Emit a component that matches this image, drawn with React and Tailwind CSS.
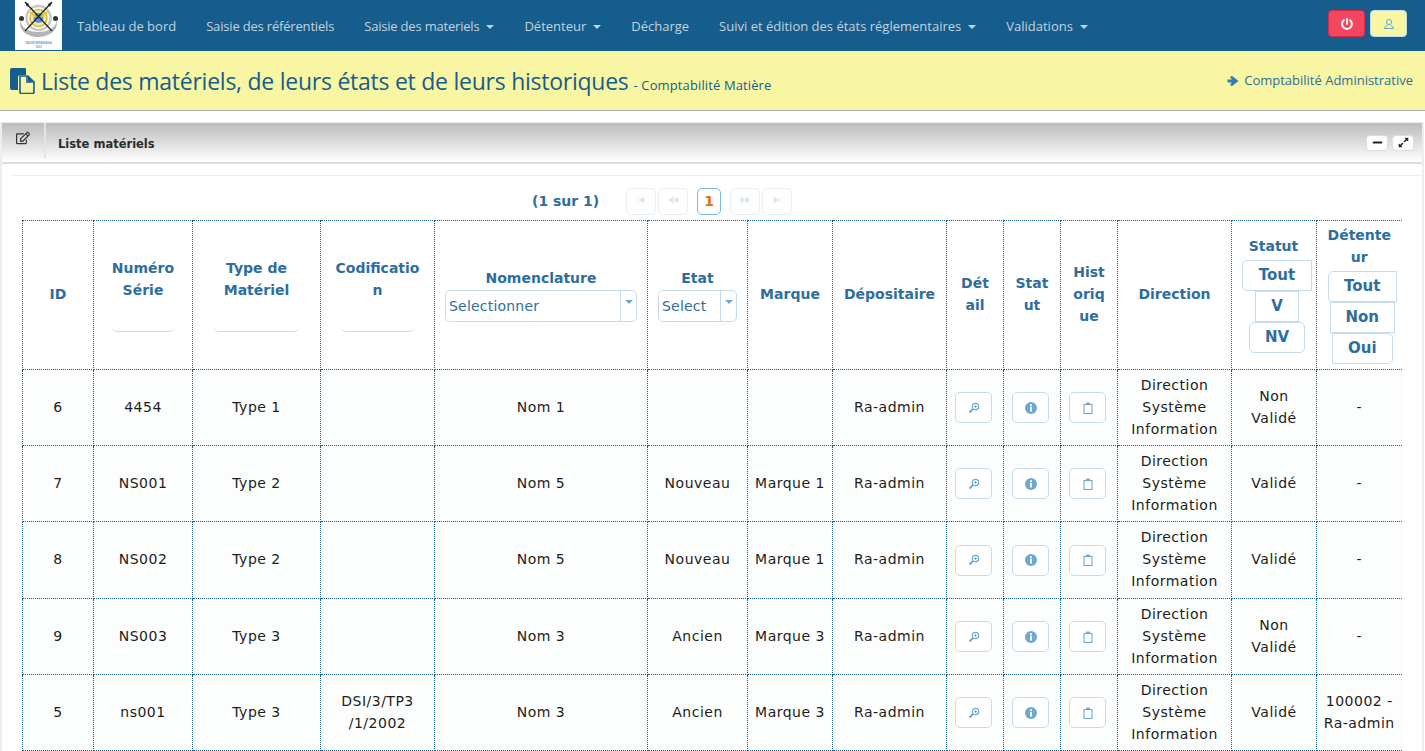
import React from "react";
import { FaRegEdit, FaMinus, FaExpandAlt, FaPowerOff } from "react-icons/fa";

const NAV = [
  ["Tableau de bord", false, ""],
  ["Saisie des référentiels", false, "tracking-[-0.18px]"],
  ["Saisie des materiels", true, "tracking-[-0.2px]"],
  ["Détenteur", true, ""],
  ["Décharge", false, ""],
  ["Suivi et édition des états réglementaires", true, ""],
  ["Validations", true, ""],
];

const WIDTHS = [71, 99, 128, 114, 213, 100, 85, 114, 57, 57, 57, 114, 85, 85];

const ROWS = [
  ["6", "4454", "Type 1", "", "Nom 1", "", "", "Ra-admin", ["Non", "Validé"], "-"],
  ["7", "NS001", "Type 2", "", "Nom 5", "Nouveau", "Marque 1", "Ra-admin", ["Validé"], "-"],
  ["8", "NS002", "Type 2", "", "Nom 5", "Nouveau", "Marque 1", "Ra-admin", ["Validé"], "-"],
  ["9", "NS003", "Type 3", "", "Nom 3", "Ancien", "Marque 3", "Ra-admin", ["Non", "Validé"], "-"],
  ["5", "ns001", "Type 3", ["DSI/3/TP3", "/1/2002"], "Nom 3", "Ancien", "Marque 3", "Ra-admin", ["Validé"], ["100002 -", "Ra-admin"]],
];

const ROW_H = [76, 76, 77, 76, 76];

function Lines({ v }) {
  if (Array.isArray(v)) return v.map((l, i) => <div key={i}>{l}</div>);
  return v;
}

function Caret() {
  return <span className="inline-block ml-[7px] align-middle border-x-[4px] border-x-transparent border-t-[4px] border-t-[#c4d3de]" />;
}

function Logo() {
  return (
    <div className="w-[47px] h-[50px] bg-white shrink-0 relative">
      <svg viewBox="0 0 47 50" className="w-[47px] h-[50px]">
        <path d="M5 21 C4 32 14 37 23 37 C32 37 43 32 42 21 C40 28 33 32 23 32 C13 32 7 28 5 21Z" fill="#b5b5b5" />
        <circle cx="23.5" cy="18" r="12" fill="none" stroke="#c8c8c8" strokeWidth="2.5" />
        <circle cx="23.5" cy="18" r="8.5" fill="#efe7b0" stroke="#d9b93c" strokeWidth="1.5" />
        <circle cx="23.5" cy="18" r="5" fill="#5b8fd8" />
        <path d="M10 2 L37 31 M37 2 L10 31" stroke="#222" strokeWidth="1.2" />
        <path d="M10 2 L14 4 L12 7Z M37 2 L33 4 L35 7Z" fill="#222" />
        <circle cx="6.5" cy="18.5" r="2.5" fill="#333" />
        <circle cx="40.5" cy="18.5" r="2.5" fill="#333" />
        <path d="M15 12 L21 17 M32 12 L26 17" stroke="#e3c52c" strokeWidth="2" />
      </svg>
      <div className="absolute left-0 right-0 top-[41px] text-center text-[3px] leading-[4px] font-bold text-[#6f9be0]">FAONTSERANANA</div>
      <div className="absolute left-0 right-0 top-[45px] text-center text-[3px] leading-[4px] text-[#555]">1820</div>
    </div>
  );
}

function PageIcon() {
  return (
    <svg viewBox="0 0 25 26" className="w-[25px] h-[26px] shrink-0">
      <path d="M2 0 H15 a1 1 0 0 1 1 1 V7 H10 a2 2 0 0 0 -2 2 V22 H2 a2 2 0 0 1 -2 -2 V2 a2 2 0 0 1 2 -2Z" fill="#155d8d" />
      <path d="M10 8 H17 V14 H24 V24 a1.5 1.5 0 0 1 -1.5 1.5 H11.5 A1.5 1.5 0 0 1 10 24Z" fill="#f8f6a2" stroke="#155d8d" strokeWidth="1.6" />
      <path d="M18 7 L24.5 13.5 H18Z" fill="#155d8d" />
    </svg>
  );
}

function ArrowIcon() {
  return (
    <svg viewBox="0 0 12 12" className="w-[12px] h-[12px] shrink-0">
      <path d="M0.5 4.5 H5 L3 2.5 L4.8 0.8 L11.5 6 L4.8 11.2 L3 9.5 L5 7.5 H0.5Z" fill="#337ab7" />
    </svg>
  );
}

function PersonIcon() {
  return (
    <svg viewBox="0 0 12 12" className="w-[12px] h-[12px]" fill="none" stroke="#6da8d5" strokeWidth="1">
      <ellipse cx="6" cy="4" rx="2.6" ry="2.6" />
      <path d="M4.5 7 L2 9 V10.5 H10 V9 L7.5 7" />
      <path d="M1 10.5 H11" />
    </svg>
  );
}

function PagerBtn({ kind }) {
  const paths = {
    first: "M2 2 V8 M8 2 L3.5 5 L8 8Z",
    prev: "M5 2 L1 5 L5 8Z M10 2 L6 5 L10 8Z",
    next: "M1 2 L5 5 L1 8Z M6 2 L10 5 L6 8Z",
    last: "M2 2 L6.5 5 L2 8Z M8 2 V8",
  };
  return (
    <span className="w-[30px] h-[27px] rounded-[5px] border border-[#e5f0f7] flex items-start justify-center pt-[6px] bg-white">
      <svg viewBox="0 0 11 10" className="w-[11px] h-[10px]" fill="#d6e5f0" stroke="#d6e5f0" strokeWidth="0.6"><path d={paths[kind]} /></svg>
    </span>
  );
}

function ActionBtn({ children }) {
  return (
    <span className="ml-[8px] w-[37px] h-[31px] rounded-[5px] border border-[#c5dbec] flex items-center justify-center bg-white">
      {children}
    </span>
  );
}

function ZoomIcon() {
  return (
    <svg viewBox="0 0 12 12" className="w-[12px] h-[12px]" fill="none" stroke="#6da8d5" strokeWidth="1.2">
      <circle cx="7.5" cy="4.5" r="3.2" />
      <path d="M5 7 L1.5 10.5" strokeWidth="2" />
      <path d="M6 4.5 H9 M7.5 3 V6" strokeWidth="0.9" />
    </svg>
  );
}

function InfoIcon() {
  return (
    <svg viewBox="0 0 12 12" className="w-[12px] h-[12px]">
      <circle cx="6" cy="6" r="6" fill="#6da8d5" />
      <rect x="5" y="5" width="2" height="4.5" fill="#fff" />
      <rect x="5" y="2.3" width="2" height="1.8" fill="#fff" />
    </svg>
  );
}

function ClipIcon() {
  return (
    <svg viewBox="0 0 10 12" className="w-[10px] h-[12px]" fill="none" stroke="#6da8d5" strokeWidth="1.1">
      <rect x="1" y="2.5" width="8" height="9" />
      <rect x="3" y="0.6" width="4" height="2.4" fill="#6da8d5" stroke="none" />
    </svg>
  );
}

function Dropdown({ w, label }) {
  return (
    <div className={`mx-auto ${w} h-[32px] rounded-[5px] border border-[#c5dbec] flex bg-white font-normal text-left`}>
      <span className="flex-1 pl-[3px] leading-[30px] tracking-[0.2px] text-[#2e6e9e]">{label}</span>
      <span className="w-[16px] border-l border-[#c5dbec] flex justify-center pt-[9px]">
        <span className="block w-0 h-0 border-x-[4px] border-x-transparent border-t-[4px] border-t-[#6da8d5]" />
      </span>
    </div>
  );
}

function Toggle({ label, w, rounded }) {
  return (
    <div className={`mx-auto ${w} h-[31px] leading-[29px] text-[15px] border border-[#c5dbec] ${rounded} bg-white`}>{label}</div>
  );
}

function FilterInput({ w }) {
  return <div className={`mx-auto mt-[11px] ${w} h-[20px] border-b border-[#c5dbec] rounded-b-[5px]`} />;
}

const TH = "border border-dotted border-[#155d8d] px-0 align-middle text-center font-bold text-[#2e6e9e] text-[14px] leading-[22px] last:border-r-0";
const THT = `${TH} pb-[2px]`;
const TD = "border border-dotted border-[#155d8d] p-0 pb-[2px] align-middle text-center text-[#1c1c1c] text-[14px] leading-[22px] tracking-[0.5px] last:border-r-0";
const TDA = "border border-dotted border-[#155d8d] p-0 align-middle text-center";

export default function App() {
  return (
    <div className="w-[1425px] h-[751px] overflow-hidden bg-white font-['Open_Sans',sans-serif]">
      <nav className="h-[51px] bg-[#155d8d] flex items-start pl-[15px] pr-[18px]">
        <Logo />
        <ul className="flex items-center h-[51px] pt-[2px] flex-1 text-[13px] text-[#c4d3de]">
          {NAV.map(([t, c, k]) => (
            <li key={t} className={`px-[15px] whitespace-nowrap ${k}`}>
              {t}{c && <Caret />}
            </li>
          ))}
        </ul>
        <div className="flex gap-[5px] pt-[10px]">
          <span className="w-[37px] h-[27px] rounded-[4px] bg-[#f2475f] border border-[#d92b45] flex items-center justify-center text-white">
            <FaPowerOff size={12} />
          </span>
          <span className="w-[37px] h-[27px] rounded-[4px] bg-[#f8f6a2] border border-[#c5dbec] flex items-center justify-center">
            <PersonIcon />
          </span>
        </div>
      </nav>

      <header className="h-[60px] bg-[#f8f6a2] border-b border-[#aaaaaa] flex items-center pl-[10px] pr-[12px] text-[#155d8d]">
        <PageIcon />
        <h1 className="ml-[6px] text-[23px] tracking-[-0.25px] leading-[32px] font-normal whitespace-nowrap">Liste des matériels, de leurs états et de leurs historiques</h1>
        <span className="ml-[5px] mt-[11px] text-[13px] tracking-[0.12px] whitespace-nowrap">- Comptabilité Matière</span>
        <span className="ml-auto flex items-center gap-[5px] text-[13px] text-[#2e6e9e] whitespace-nowrap">
          <ArrowIcon />
          Comptabilité Administrative
        </span>
      </header>

      <section className="mt-[11px] mr-[1px] border-l-2 border-r-2 border-t border-[#eeeeee]">
        <div className="h-[41px] border-b-2 border-[#dddddd] bg-gradient-to-b from-[#bcbcbc] to-white flex items-center">
          <div className="w-[44px] h-[35px] border-r-2 border-[#e4e4e4] flex justify-center pb-[5px] -mt-[5px] items-center text-[#333333]">
            <FaRegEdit size={14} />
          </div>
          <h2 className="ml-[12px] mt-[3px] text-[11.5px] font-bold text-[#2b2b2b] font-['DejaVu_Sans',sans-serif] leading-[16px]">Liste matériels</h2>
          <div className="ml-auto mr-[8px] flex gap-[4px]">
            <span className="w-[22px] h-[16px] bg-white rounded-[4px] border border-[#dddddd] flex items-center justify-center text-[#222]"><FaMinus size={11} /></span>
            <span className="w-[22px] h-[16px] bg-white rounded-[4px] border border-[#dddddd] flex items-center justify-center text-[#222]"><FaExpandAlt size={11} /></span>
          </div>
        </div>

        <div className="pl-[9px] pt-[11px] font-['DejaVu_Sans',sans-serif]">
          <div className="border-t border-[#eeeeee] pt-[12px]">
            <div className="h-[27px] flex items-center pl-[521px]">
              <span className="text-[14px] font-bold text-[#2e6e9e] w-[94px] whitespace-nowrap">(1 sur 1)</span>
              <div className="flex gap-[2px]"><PagerBtn kind="first" /><PagerBtn kind="prev" /></div>
              <span className="mx-[9px] w-[24px] h-[27px] rounded-[5px] border border-[#79b7e7] flex items-center justify-center font-bold text-[14px] text-[#e17009]">1</span>
              <div className="flex gap-[2px]"><PagerBtn kind="next" /><PagerBtn kind="last" /></div>
            </div>

            <div className="mt-[5px] ml-[11px]">
              <table className="table-fixed border-collapse w-[1379px]">
                <colgroup>
                  {WIDTHS.map((w, i) => <col key={i} style={{ width: w }} />)}
                </colgroup>
                <thead>
                  <tr className="h-[149px] bg-white">
                    <th className={THT}>ID</th>
                    <th className={THT}>Numéro<br />Série<FilterInput w="w-[62px]" /></th>
                    <th className={THT}>Type de<br />Matériel<FilterInput w="w-[85px]" /></th>
                    <th className={THT}>Codificatio<br />n<FilterInput w="w-[73px]" /></th>
                    <th className={TH}><div className="-mt-[1px] pb-[1px]">Nomenclature</div><Dropdown w="w-[192px]" label="Selectionner" /></th>
                    <th className={TH}><div className="-mt-[1px] pb-[1px]">Etat</div><Dropdown w="w-[79px]" label="Select" /></th>
                    <th className={THT}>Marque</th>
                    <th className={THT}>Dépositaire</th>
                    <th className={THT}>Dét<br />ail</th>
                    <th className={THT}>Stat<br />ut</th>
                    <th className={THT}>Hist<br />oriq<br />ue</th>
                    <th className={THT}>Direction</th>
                    <th className={THT}>
                      <div className="pr-[1px] -mt-[1px] pb-[1px]">Statut</div>
                      <div className="pt-[2px] pl-[6px]">
                        <Toggle label="Tout" w="w-[70px]" rounded="rounded-l-[5px]" />
                        <Toggle label="V" w="w-[44px]" rounded="" />
                        <Toggle label="NV" w="w-[56px]" rounded="rounded-[5px]" />
                      </div>
                    </th>
                    <th className={THT}>
                      <div className="-mt-[1px] pb-[1px]">Détente<br />ur</div>
                      <div className="pt-[2px] pl-[6px]">
                        <Toggle label="Tout" w="w-[69px]" rounded="rounded-l-[5px]" />
                        <Toggle label="Non" w="w-[65px]" rounded="" />
                        <Toggle label="Oui" w="w-[61px]" rounded="rounded-r-[5px]" />
                      </div>
                    </th>
                  </tr>
                </thead>
                <tbody>
                  {ROWS.map((r, i) => (
                    <tr key={i} style={{ height: ROW_H[i] }} className="bg-[#fcfefd]">
                      <td className={TD}>{r[0]}</td>
                      <td className={TD}>{r[1]}</td>
                      <td className={TD}>{r[2]}</td>
                      <td className={TD}><Lines v={r[3]} /></td>
                      <td className={TD}>{r[4]}</td>
                      <td className={TD}>{r[5]}</td>
                      <td className={TD}>{r[6]}</td>
                      <td className={TD}>{r[7]}</td>
                      <td className={TDA}><ActionBtn><ZoomIcon /></ActionBtn></td>
                      <td className={TDA}><ActionBtn><InfoIcon /></ActionBtn></td>
                      <td className={TDA}><ActionBtn><ClipIcon /></ActionBtn></td>
                      <td className={TD}><div>Direction</div><div>Système</div><div>Information</div></td>
                      <td className={TD}><Lines v={r[8]} /></td>
                      <td className={TD}><Lines v={r[9]} /></td>
                    </tr>
                  ))}
                </tbody>
              </table>
            </div>
          </div>
        </div>
      </section>
    </div>
  );
}
